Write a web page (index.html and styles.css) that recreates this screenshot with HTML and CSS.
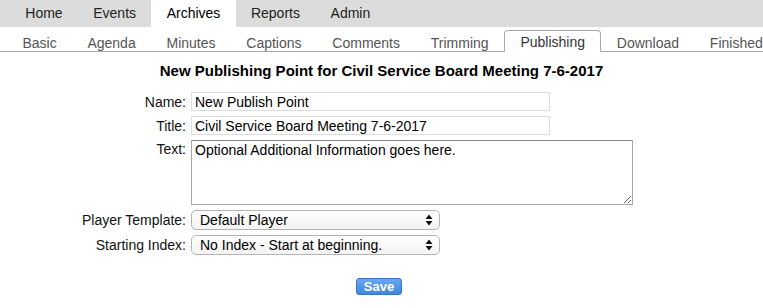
FILE: index.html
```html
<!DOCTYPE html>
<html lang="en">
<head>
  <meta charset="UTF-8" />
  <title>Archives - Publishing</title>
  <link rel="stylesheet" href="styles.css">
</head>
<body>

  <!-- main navigation -->
  <div class="topnav">
    <a href="#">Home</a>
    <a href="#">Events</a>
    <a href="#" class="active">Archives</a>
    <a href="#">Reports</a>
    <a href="#">Admin</a>
  </div>

  <!-- archive sub tabs -->
  <div class="subnav">
    <a href="#">Basic</a>
    <a href="#">Agenda</a>
    <a href="#">Minutes</a>
    <a href="#">Captions</a>
    <a href="#">Comments</a>
    <a href="#">Trimming</a>
    <a href="#" class="active">Publishing</a>
    <a href="#">Download</a>
    <a href="#">Finished</a>
  </div>

  <h1>New Publishing Point for Civil Service Board Meeting 7-6-2017</h1>

  <form class="pubform">
    <label for="name">Name:</label>
    <input type="text" id="name" class="field" value="New Publish Point" />

    <label for="title">Title:</label>
    <input type="text" id="title" class="field" value="Civil Service Board Meeting 7-6-2017" />

    <label for="text" class="top">Text:</label>
    <textarea id="text">Optional Additional Information goes here.</textarea>

    <label for="player">Player Template:</label>
    <div class="selectwrap">
      <select id="player">
        <option>Default Player</option>
      </select>
      <svg class="arrows" width="8" height="12" viewBox="0 0 8 12"><path d="M4 0.5 L7.5 5 L0.5 5 Z M4 11.5 L7.5 7 L0.5 7 Z" fill="#111"/></svg>
    </div>

    <label for="index">Starting Index:</label>
    <div class="selectwrap">
      <select id="index">
        <option>No Index - Start at beginning.</option>
      </select>
      <svg class="arrows" width="8" height="12" viewBox="0 0 8 12"><path d="M4 0.5 L7.5 5 L0.5 5 Z M4 11.5 L7.5 7 L0.5 7 Z" fill="#111"/></svg>
    </div>
  </form>

  <div class="actions">
    <button type="button">Save</button>
  </div>

</body>
</html>
```

FILE: styles.css
```css
body {
  margin: 0;
  font-family: 'Liberation Sans', Arial, sans-serif;
  font-size: 14px;
  color: #000;
  background: #fff;
}

a { text-decoration: none; }

.topnav {
  display: flex;
  background: #dcdcdc;
  height: 27px;
  padding-left: 10px;
}

.topnav a {
  padding: 0 15.3px;
  line-height: 27px;
  color: #222;
}

.topnav a.active {
  background: #fff;
  color: #000;
}

.subnav {
  display: flex;
  height: 24px;
  padding-left: 7px;
  border-bottom: 1px solid #a8a8a8;
  align-items: flex-end;
}

.subnav a {
  padding: 0 15.4px;
  line-height: 22px;
  height: 20px;
  color: #555;
  margin-bottom: -1px;
}

.subnav a.active {
  height: 20px;
  border: 1px solid #a8a8a8;
  border-bottom: 1px solid #fff;
  border-radius: 4px 4px 0 0;
  color: #333;
  background: #fff;
}

h1 {
  font-size: 15px;
  font-weight: bold;
  text-align: center;
  margin: 10px 0 13px;
}

.pubform {
  display: grid;
  grid-template-columns: 178px auto;
  column-gap: 5px;
  row-gap: 5px;
  padding-left: 8px;
  align-items: center;
  justify-items: start;
}

.pubform label {
  justify-self: end;
  color: #111;
}

.pubform label.top {
  align-self: start;
  padding-top: 1px;
}

.field {
  width: 359px;
  height: 19px;
  box-sizing: border-box;
  border: 1px solid #dedede;
  padding: 0 3px;
  font-family: inherit;
  font-size: 14px;
  color: #000;
}

textarea {
  width: 442px;
  height: 65px;
  box-sizing: border-box;
  border: 1px solid #a6a6a6;
  border-top-color: #8a8a8a;
  padding: 1px 3px;
  font-family: inherit;
  font-size: 14px;
  resize: both;
}

.selectwrap {
  position: relative;
}

select {
  -webkit-appearance: none;
  appearance: none;
  width: 249px;
  height: 20px;
  border: 1px solid #b5b5b5;
  border-radius: 5px;
  background: linear-gradient(#ffffff, #f3f3f3);
  padding: 0 0 0 8px;
  font-family: inherit;
  font-size: 14px;
  color: #000;
  display: block;
}

.arrows {
  position: absolute;
  right: 7px;
  top: 4px;
  pointer-events: none;
}

.actions {
  text-align: center;
  margin-top: 23px;
}

button {
  width: 46px;
  height: 17px;
  padding: 0;
  border: 1px solid #3b73c4;
  border-radius: 3px;
  background: linear-gradient(#6aa8ee, #3f86e0);
  color: #fff;
  font-family: inherit;
  font-size: 13px;
  font-weight: bold;
  line-height: 15px;
  margin-left: -5px;
}
```
